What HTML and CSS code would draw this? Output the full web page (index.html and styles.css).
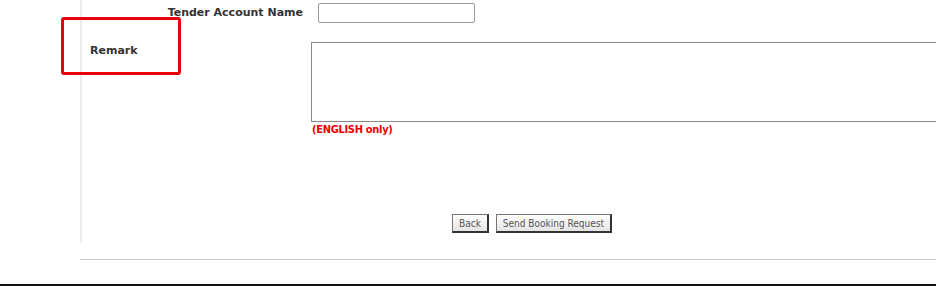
FILE: index.html
```html
<!DOCTYPE html>
<html lang="en">
<head>
  <meta charset="UTF-8" />
  <title>Booking Request</title>
  <link rel="stylesheet" href="styles.css">
</head>
<body>

  <div class="content">
    <div class="form">
      <label class="label label-right" for="tender">Tender Account Name</label>
      <div class="field">
        <input type="text" id="tender" class="text-input">
      </div>

      <label class="label label-left" for="remark">Remark</label>
      <div class="field field-remark">
        <textarea id="remark" class="remark-box"></textarea>
        <div class="note">(ENGLISH only)</div>
      </div>
    </div>

    <div class="actions">
      <button type="button" class="btn">Back</button>
      <button type="button" class="btn">Send Booking Request</button>
    </div>
  </div>

  <div class="divider"></div>
  <div class="bottom-bar"></div>

  <div class="highlight"></div>

</body>
</html>
```

FILE: styles.css
```css
body {
  margin: 0;
  background-color: #fff;
  font-family: "DejaVu Sans", Verdana, sans-serif;
  font-size: 11px;
  color: #333;
  overflow: hidden;
}

.content {
  margin-left: 80px;
  border-left: 2px solid #ececec;
  height: 243px;
  box-sizing: border-box;
  padding-top: 3px;
}

.form {
  display: grid;
  grid-template-columns: 229px 1fr;
  row-gap: 19px;
}

.label {
  font-weight: bold;
  color: #333;
}

.label-right {
  text-align: right;
  padding-right: 8px;
  padding-top: 3px;
}

.label-left {
  padding-left: 8px;
  padding-top: 2px;
}

.text-input {
  margin: 0 0 0 7px;
  width: 157px;
  height: 20px;
  box-sizing: border-box;
  border: 1px solid #999;
  border-radius: 2px;
  padding: 0;
}

.remark-box {
  display: block;
  margin: 0;
  width: 640px;
  height: 80px;
  box-sizing: border-box;
  border: 1px solid #888;
  resize: none;
  padding: 0;
}

.note {
  color: #e00;
  font-weight: bold;
  font-family: "DejaVu Sans Condensed", "DejaVu Sans", sans-serif;
  letter-spacing: -0.3px;
  padding-left: 1px;
  margin-top: 1px;
}

.actions {
  display: flex;
  gap: 7px;
  margin-top: 78px;
  padding-left: 370px;
}

.btn {
  height: 19px;
  padding: 0 6px;
  font-family: "DejaVu Sans Condensed", "DejaVu Sans", sans-serif;
  font-size: 10px;
  color: #555;
  background: linear-gradient(#fff, #e4e4e4);
  border: 1px solid #777;
  border-right: 2px solid #333;
  border-bottom: 2px solid #333;
  border-radius: 0;
}

.divider {
  margin: 16px 0 0 80px;
  border-top: 1px solid #ccc;
}

.bottom-bar {
  margin-top: 24px;
  height: 2px;
  background-color: #111;
}

.highlight {
  position: absolute;
  left: 61px;
  top: 17px;
  width: 120px;
  height: 58px;
  box-sizing: border-box;
  border: 3px solid #e8000b;
  border-radius: 3px;
}
```
